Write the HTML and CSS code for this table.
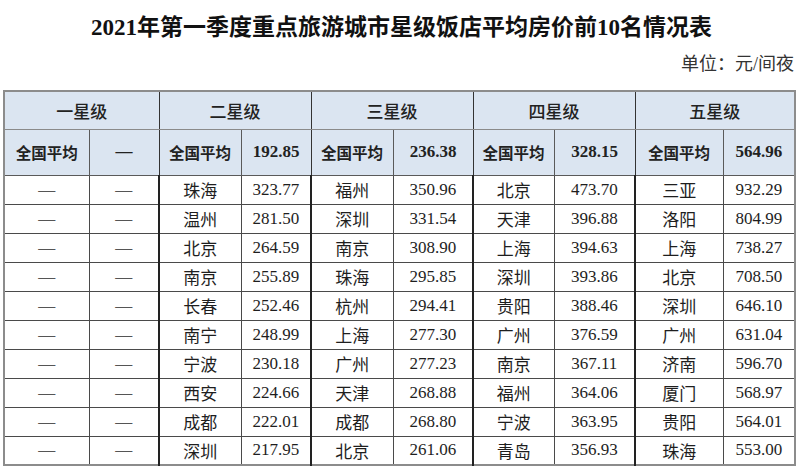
FILE: index.html
```html
<!DOCTYPE html>
<html lang="zh-CN">
<head>
<meta charset="utf-8">
<title>2021年第一季度重点旅游城市星级饭店平均房价前10名情况表</title>
<link rel="stylesheet" href="styles.css">
</head>
<body>
<div class="page">
  <h1 class="title">2021年第一季度重点旅游城市星级饭店平均房价前10名情况表</h1>
  <div class="unit">单位：元/间夜</div>
  <table class="rank">
    <colgroup>
      <col class="c85"><col class="c70">
      <col class="c82"><col class="c70">
      <col class="c82"><col class="c80">
      <col class="c81"><col class="c81">
      <col class="c88"><col class="c72">
    </colgroup>
    <thead>
      <tr class="h1row">
        <th colspan="2" class="grp">一星级</th>
        <th colspan="2" class="grp">二星级</th>
        <th colspan="2" class="grp">三星级</th>
        <th colspan="2" class="grp">四星级</th>
        <th colspan="2">五星级</th>
      </tr>
      <tr class="h2row">
        <th>全国平均</th><th class="num grp">—</th>
        <th>全国平均</th><th class="num grp">192.85</th>
        <th>全国平均</th><th class="num grp">236.38</th>
        <th>全国平均</th><th class="num grp">328.15</th>
        <th>全国平均</th><th class="num">564.96</th>
      </tr>
    </thead>
    <tbody>
      <tr><td class="dash">—</td><td class="dash grp">—</td><td>珠海</td><td class="num grp">323.77</td><td>福州</td><td class="num grp">350.96</td><td>北京</td><td class="num grp">473.70</td><td>三亚</td><td class="num">932.29</td></tr>
      <tr><td class="dash">—</td><td class="dash grp">—</td><td>温州</td><td class="num grp">281.50</td><td>深圳</td><td class="num grp">331.54</td><td>天津</td><td class="num grp">396.88</td><td>洛阳</td><td class="num">804.99</td></tr>
      <tr><td class="dash">—</td><td class="dash grp">—</td><td>北京</td><td class="num grp">264.59</td><td>南京</td><td class="num grp">308.90</td><td>上海</td><td class="num grp">394.63</td><td>上海</td><td class="num">738.27</td></tr>
      <tr><td class="dash">—</td><td class="dash grp">—</td><td>南京</td><td class="num grp">255.89</td><td>珠海</td><td class="num grp">295.85</td><td>深圳</td><td class="num grp">393.86</td><td>北京</td><td class="num">708.50</td></tr>
      <tr><td class="dash">—</td><td class="dash grp">—</td><td>长春</td><td class="num grp">252.46</td><td>杭州</td><td class="num grp">294.41</td><td>贵阳</td><td class="num grp">388.46</td><td>深圳</td><td class="num">646.10</td></tr>
      <tr><td class="dash">—</td><td class="dash grp">—</td><td>南宁</td><td class="num grp">248.99</td><td>上海</td><td class="num grp">277.30</td><td>广州</td><td class="num grp">376.59</td><td>广州</td><td class="num">631.04</td></tr>
      <tr><td class="dash">—</td><td class="dash grp">—</td><td>宁波</td><td class="num grp">230.18</td><td>广州</td><td class="num grp">277.23</td><td>南京</td><td class="num grp">367.11</td><td>济南</td><td class="num">596.70</td></tr>
      <tr><td class="dash">—</td><td class="dash grp">—</td><td>西安</td><td class="num grp">224.66</td><td>天津</td><td class="num grp">268.88</td><td>福州</td><td class="num grp">364.06</td><td>厦门</td><td class="num">568.97</td></tr>
      <tr><td class="dash">—</td><td class="dash grp">—</td><td>成都</td><td class="num grp">222.01</td><td>成都</td><td class="num grp">268.80</td><td>宁波</td><td class="num grp">363.95</td><td>贵阳</td><td class="num">564.01</td></tr>
      <tr><td class="dash">—</td><td class="dash grp">—</td><td>深圳</td><td class="num grp">217.95</td><td>北京</td><td class="num grp">261.06</td><td>青岛</td><td class="num grp">356.93</td><td>珠海</td><td class="num">553.00</td></tr>
    </tbody>
  </table>
</div>
</body>
</html>
```

FILE: styles.css
```css
html, body {
  margin: 0;
  padding: 0;
  background: #ffffff;
}

body {
  font-family: "Liberation Serif", "Noto Sans CJK SC", serif;
  color: #1a1a1a;
}

.page {
  width: 791px;
  padding: 0 0 0 3px;
}

.title {
  margin: 12px 0 0 0;
  font-size: 23px;
  line-height: 32px;
  font-weight: bold;
  text-align: center;
  color: #111;
  padding-left: 6px;
}

.unit {
  margin-top: 8px;
  height: 24px;
  line-height: 24px;
  font-size: 18px;
  text-align: right;
  color: #333;
}

.rank {
  margin-top: 14px;
  border-collapse: collapse;
  table-layout: fixed;
  width: 791px;
  border: 2px solid #8c8c8c;
}

.c85 { width: 85px; }
.c70 { width: 70px; }
.c82 { width: 82px; }
.c80 { width: 80px; }
.c81 { width: 81px; }
.c88 { width: 88px; }
.c72 { width: 72px; }

.rank th,
.rank td {
  border: 1px solid #4a4a4a;
  text-align: center;
  vertical-align: middle;
  padding: 0;
  white-space: nowrap;
}

.rank th {
  background: #dbe5f1;
  color: #222;
  font-weight: bold;
  border-color: #5a5a5a;
}

.rank .grp {
  border-right: 1px solid #333;
}

.h1row {
  height: 38px;
}

.h1row th {
  font-size: 17px;
  font-weight: 500;
  border-bottom-color: #8a8a8a;
}

.h2row {
  height: 46px;
}

.h2row th {
  font-size: 15.5px;
}

.h2row th.num {
  font-size: 17px;
}

.rank tbody tr {
  height: 29px;
}

.rank td {
  font-size: 17px;
  color: #1e1e1e;
}

.rank td.dash {
  color: #555;
}

.rank td.num {
  font-size: 17px;
}

.rank tbody td.grp {
  border-right: 2px solid #222;
}

.rank tbody td:last-child {
  border-right: none;
}
```
